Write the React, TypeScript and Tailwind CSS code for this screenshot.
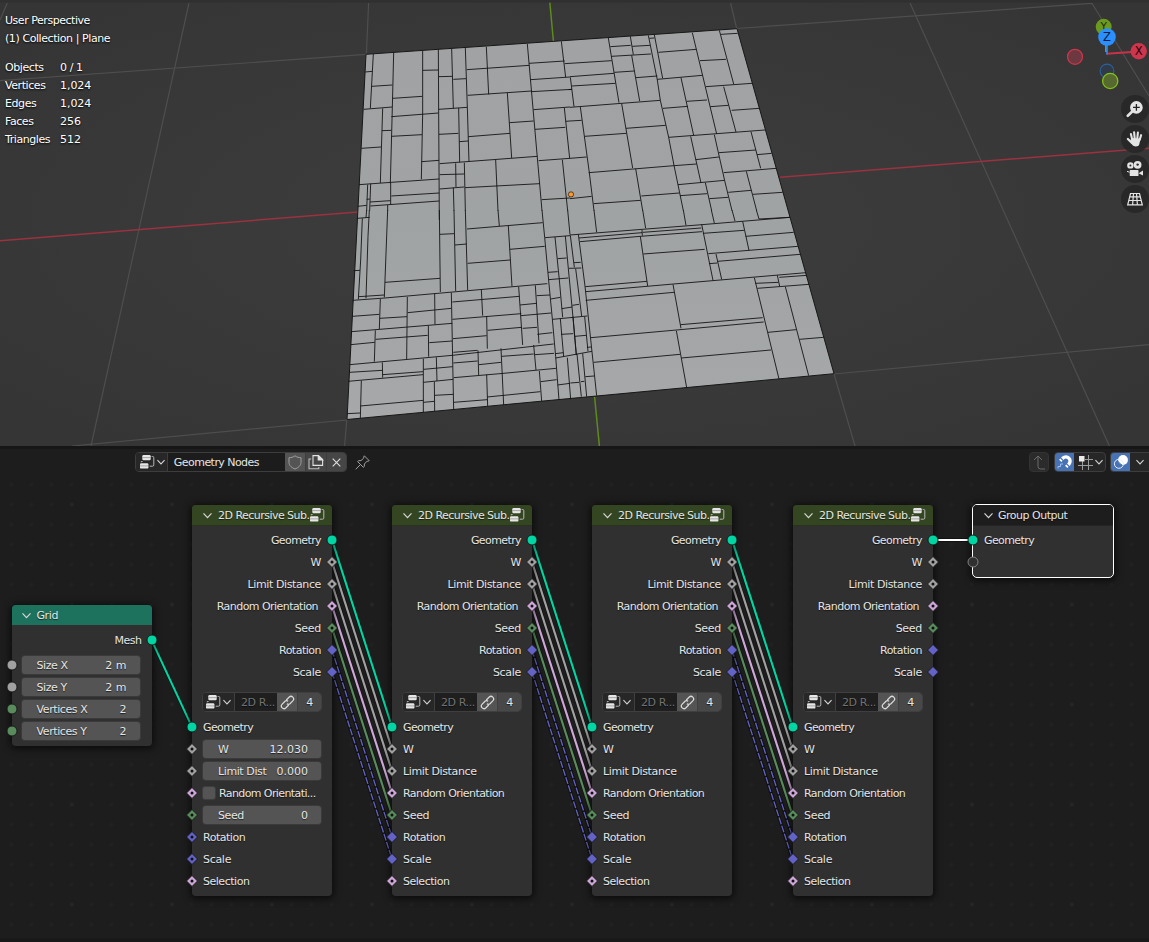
import type { ReactNode } from "react";

type SocketKind = "geometry" | "float" | "bool" | "int" | "vector";
type SocketShape = "circle" | "dot" | "solid";

const SOCKET_FILL: Record<SocketKind, string> = {
  geometry: "#00d6a3",
  float: "#a1a1a1",
  bool: "#cca6d6",
  int: "#598c5c",
  vector: "#6363c7",
};

/* Edges of the subdivided plane, stored in four tiles at one third of a pixel. */
const EDGES_NW =
  "M100 102L91 265M76 156L97 154M95 199L157 195M161 98L157 262L151 490M71 268L157 261M128 265L121 489M126 332L154 331M64 385L123 381M158 235L247 229M154 290L296 279M154 349L246 344M248 93L248 282L244 478M248 151L295 150M295 88L296 280L298 600M245 425L297 421M57 494L154 487L298 477M335 86L340 265M296 170L337 169M340 178L378 176M376 84L382 262L387 425M296 268L382 262M380 149L568 136M439 80L446 223M383 226L575 213M562 72L606 572M356 264L359 427M297 343L355 340M358 365L385 363M385 350L510 340M502 219L515 414M509 308L581 303M299 431L592 409M347 430L348 501M299 464L372 462M373 428L376 572M299 507L372 501M375 503L599 491M467 420L474 572M340 503L342 572M154 528L298 519M90 546L151 542M91 558L298 543M92 491L89 572M83 494L80 572M152 487L152 553M80 538L90 537M54 559L80 556M143 555L143 572M567 130L674 123M664 64L677 172M572 179L690 171M691 172L702 260M574 215L696 208M580 269L690 261M673 264L689 415M677 304L690 303M585 328L676 322M596 422L690 415M667 419L683 572M605 539L690 534";
const EDGES_NE =
  "M-16 131L125 122M115 54L147 248M0 170L132 160M6 198L136 190M-4 209L6 208M0 262L271 241M121 80L182 76M181 49L190 104M124 109L243 102M187 79L240 76M235 46L262 180L271 241L296 352L312 436L340 572M238 55L253 54M253 44L278 175M262 178L397 166M265 97L379 88M367 38L440 342M448 31L491 192M453 43L503 40M390 122L468 118M408 200L546 190M133 157L193 153M185 106L209 243M198 173L262 168M333 173L371 346M279 265L354 259M350 244L411 240M461 200L498 336M421 260L475 256M485 271L568 265M296 352L585 330M155 251L188 444M168 325L287 316M44 349L169 340M31 261L58 458L72 572M56 458L312 437L380 432M362 349L393 489M377 419L447 411M433 344L464 482L486 572M543 335L572 445M447 398L558 390M561 404L605 400M461 458L619 445M324 494L464 481M406 488L425 572M330 527L411 521M418 536L474 532M475 517L544 511M529 454L560 572M549 523L638 517M197 446L218 572M71 551L212 541M214 528L328 519M0 303L35 301M0 415L50 411M0 536L65 529";
const EDGES_SW =
  "M52 25L89 22M80 0L78 23M88 0L84 80L78 265M67 25L62 150L55 268M41 182L60 181M143 0L133 262M135 217L300 205M57 260L133 255M38 271L135 264L622 221M298 0L301 246M300 73L342 71M342 0L347 243M345 105L380 102M376 0L383 240M381 57L608 38M474 0L478 48M505 48L516 229M509 118L614 109M383 160L511 150M606 0L614 82L627 222L637 327L647 440L657 570M683 0L690 74M615 83L690 77M645 81L658 210L668 322M661 326L671 440M676 78L685 176L699 322L709 435M691 76L703 172M653 146L680 144M624 187L653 185M626 209L685 204M702 158L722 157M686 175L724 174M707 176L725 318M632 267L661 262M665 296L697 291M697 286L717 283M638 328L742 318M663 373L700 371M705 379L738 376M647 444L756 424M646 431L670 428M699 320L709 435M734 320L744 424M741 412L753 411M711 432L724 560M728 430L740 560M653 525L690 520M691 519L717 517M723 515L733 514M736 500L763 498M682 443L692 568M121 267L118 357M37 319L118 313M202 261L200 447M119 325L201 320M34 365L337 340M106 361L103 455M107 388L263 376M32 404L104 397M284 251L285 343M203 308L334 295M334 248L341 600M265 347L266 440M268 398L337 393M29 464L337 436L641 402M127 457L128 503M28 487L127 481M24 514L249 494M128 494L249 485M64 512L61 625M61 588L250 571M21 611L61 609M250 446L250 607M289 442L291 513M251 478L338 470M250 517L340 508M283 515L284 604M284 556L340 553M250 577L283 574M424 239L428 317M337 276L538 259M337 328L544 311M536 230L548 405M440 318L442 416M443 361L545 352M339 386L440 377M340 427L412 421M586 226L597 400M540 285L590 280M590 257L630 255M543 317L633 309M548 355L591 352M592 373L637 368M414 421L416 495M340 459L413 453M341 503L480 491L648 475M417 464L483 457M483 415L491 585M485 439L581 432M581 405L588 480M585 434L642 430M440 494L443 588M341 577L442 569M442 561L601 545M598 483L605 573M602 515L650 509";
const EDGES_SE =
  "M0 75L396 44L660 22M395 43L429 211M25 73L45 228L80 557M27 84L216 68M216 60L217 77M218 67L394 54M30 95L211 79L396 65M211 79L233 228M220 132L404 118M46 230L231 214M47 245L311 222L708 188M47 271L312 247M309 223L333 355M332 344L578 323M63 383L320 360L581 336M319 362L350 533M71 457L330 433M334 444L603 420M553 203L627 507M556 220L625 217M622 196L629 229M628 202L711 196M562 235L717 223M594 367L678 359M646 230L716 497M688 388L761 382M518 34L537 121M399 70L522 61M527 79L671 67M415 131L684 109M438 132L455 208M417 161L442 159M443 154L690 133M72 0L80 67M218 0L227 55M340 0L348 46M424 0L433 39M486 0L495 33M559 0L567 27M567 27L660 22";

function Viewport() {
  return (
    <section className="relative h-[446px] overflow-hidden bg-[#393939]">
      <svg className="block h-full w-full" viewBox="0 0 1149 446">
        <defs>
          <radialGradient id="world" cx="0.5" cy="0.5" r="0.65">
            <stop offset="0" stopColor="#3e3e3e" />
            <stop offset="1" stopColor="#353535" />
          </radialGradient>
          <linearGradient id="plane" x1="0" y1="0" x2="0" y2="1">
            <stop offset="0" stopColor="#a1a2a4" />
            <stop offset="0.5" stopColor="#a0a3a4" />
            <stop offset="1" stopColor="#a6a8aa" />
          </linearGradient>
        </defs>
        <rect width="1149" height="446" fill="url(#world)" />
        <g stroke="#4e4e4e" strokeWidth="1.2" fill="none">
          <path d="M189 3L91 446M368.6 3L366.4 54M0 80.7L366 54.3M736.5 28.5L1091.8 3.3M730.6 3L736.8 29M910 3L1109.4 446M1091.8 3L1149 96M834 374L1149 344.6M834 374L855 446M347 420L72 446M346.8 419L344.6 446M7.3 3L0 20" />
        </g>
        <g strokeWidth="1.5" fill="none">
          <path d="M0 240.7L358 212M780 177.3L1149 148.3" stroke="#9a3240" />
          <path d="M549.6 0L553.4 41M594.6 397L599.4 446" stroke="#5f8a1f" />
        </g>
        <rect width="1149" height="2.6" fill="#303030" />
        <path d="M366 54.3L737 28.7L834 373.7L347 419.5Z" fill="url(#plane)" stroke="#171717" strokeWidth="1" />
        <g stroke="#141414" strokeWidth="2.7" fill="none">
          <path d={EDGES_NW} transform="translate(340 20) scale(.33333)" />
          <path d={EDGES_NE} transform="translate(570 20) scale(.33333)" />
          <path d={EDGES_SW} transform="translate(340 210) scale(.33333)" />
          <path d={EDGES_SE} transform="translate(570 210) scale(.33333)" />
        </g>
        <circle cx="571" cy="194.4" r="2.6" fill="#ff9a2e" stroke="#3a2410" strokeWidth="0.8" />
        <g>
          <circle cx="1103.7" cy="26.8" r="8" fill="#6b9a1e" />
          <text x="1103.7" y="30" textAnchor="middle" fontFamily="DejaVu Sans" fontSize="10.5" fill="#1c2a06">Y</text>
          <path d="M1106 44v8" stroke="#7a9a30" strokeWidth="2" />
          <path d="M1106.5 53.8L1132 52" stroke="#c8334a" strokeWidth="2" />
          <path d="M1107 44v10.6" stroke="#2c86ea" strokeWidth="1.7" />
          <circle cx="1107" cy="37" r="8.8" fill="#2c8fff" />
          <text x="1107" y="41.2" textAnchor="middle" fontFamily="DejaVu Sans" fontSize="11.5" fill="#061c38">Z</text>
          <circle cx="1138.7" cy="51.2" r="8.2" fill="#cf354c" />
          <text x="1138.7" y="55.3" textAnchor="middle" fontFamily="DejaVu Sans" fontSize="11.5" fill="#23060b">X</text>
          <circle cx="1075" cy="56.8" r="7.5" fill="#6e3840" stroke="#cf354c" strokeWidth="1.2" />
          <circle cx="1107" cy="71" r="6.9" fill="#303b49" stroke="#2d5f9c" strokeWidth="1.1" />
          <circle cx="1110.2" cy="81" r="7.6" fill="#56692f" stroke="#82c214" strokeWidth="1.3" />
        </g>
      </svg>
      <div className="absolute top-[12px] left-[5px] text-[11px] leading-[18px] tracking-[-0.42px] whitespace-pre text-white [text-shadow:0_1px_2px_#000]">
        <p className="tracking-[-0.46px]">User Perspective</p>
        <p>(1) Collection | Plane</p>
        <dl className="mt-[11px] grid grid-cols-[55px_auto]">
          {[
            ["Objects", "0 / 1"],
            ["Vertices", "1,024"],
            ["Edges", "1,024"],
            ["Faces", "256"],
            ["Triangles", "512"],
          ].map(([name, value]) => (
            <div key={name} className="contents">
              <dt>{name}</dt>
              <dd className={name === "Objects" ? "tracking-[-0.42px]" : "tracking-[-0.05px]"}>{value}</dd>
            </div>
          ))}
        </dl>
      </div>
      <div className="absolute top-[95px] right-0 flex w-7 flex-col gap-[2px]">
        {[<ZoomIcon key="z" />, <HandIcon key="h" />, <CameraIcon key="c" />, <PerspectiveIcon key="p" />].map((icon, i) => (
          <button key={i} className="flex size-7 items-center justify-center rounded-full bg-[#272727]/90">
            {icon}
          </button>
        ))}
      </div>
    </section>
  );
}

function ZoomIcon() {
  return (
    <svg width="18" height="18" viewBox="0 0 18 18">
      <path d="M1.8 15.8L6.5 11.3" stroke="#e4e4e4" strokeWidth="2.6" strokeLinecap="round" />
      <circle cx="10.4" cy="7.4" r="6.3" fill="#e4e4e4" />
      <path d="M7 7.4h6.8M10.4 4v6.8" stroke="#222" strokeWidth="1.3" />
    </svg>
  );
}

function HandIcon() {
  return (
    <svg width="18" height="18" viewBox="0 0 18 18" fill="none" stroke="#e4e4e4" strokeLinecap="round">
      <path d="M6.2 9.5L4.9 4M8.7 8.5L8.1 2.2M11.3 8.5L11.9 2.6M13.6 10L15.1 5.2" strokeWidth="2.1" />
      <path d="M1.9 9L6 13" strokeWidth="2.3" />
      <path d="M5.2 8L14.6 8.500L13.3 14.2C12.8 17 7.700 17 6.4 15L4.2 11.600Z" fill="#e4e4e4" stroke="none" />
    </svg>
  );
}

function CameraIcon() {
  return (
    <svg width="18" height="18" viewBox="0 0 18 18" fill="#e4e4e4">
      <circle cx="4.4" cy="5.4" r="3.2" />
      <circle cx="11.6" cy="4.8" r="3.9" />
      <circle cx="4.4" cy="5.4" r="1" fill="#272727" />
      <circle cx="11.6" cy="4.6" r="1.2" fill="#272727" />
      <path d="M4.5 10h7.2q.8 0 .8.8v4.4q0 .9-.8.9H4.5q-.8 0-.8-.9v-4.4q0-.8.8-.8zM13 13l4-2.4v5L13 13.600z" />
      <path d="M1 11.400L3.500 12.200" stroke="#e4e4e4" />
    </svg>
  );
}

function PerspectiveIcon() {
  return (
    <svg width="18" height="18" viewBox="0 0 18 18" fill="none" stroke="#e4e4e4" strokeWidth="1.2">
      <path d="M4.5 3.500H13.500L16.300 14.800H1.700ZM3.700 6.800H14.300M2.800 10.500H15.200M7.500 3.500L6.600 14.800M10.500 3.500L11.400 14.800" />
    </svg>
  );
}

function NodeTreeIcon() {
  return (
    <svg width="15" height="14" viewBox="0 0 15 14" className="shrink-0">
      <rect x="2.300" y="0" width="8.400" height="5.300" rx="1.200" fill="#e6e6e6" />
      <rect x="0" y="8.300" width="8.400" height="5.300" rx="1.200" fill="#e6e6e6" />
      <path d="M2.300 2.600h8.400M0 10.900h8.400" stroke="#8a8a8a" strokeWidth=".7" />
      <path d="M11.700 1.500h1q1.100 0 1.100 1.100v7.300q0 1.300-1.300 1.300H9.700M1.200 7.300V6.500H2.600" fill="none" stroke="#b8b8b8" />
    </svg>
  );
}

function Chevron({ size = 9 }: { size?: number }) {
  return (
    <svg width={size} height={size} viewBox="0 0 9 9" fill="none" className="shrink-0">
      <path d="M.5 2.400L4.500 6.600L8.500 2.400" stroke="#d6d6d6" strokeWidth="1.2" />
    </svg>
  );
}

function EditorHeader() {
  return (
    <header className="flex h-[29px] items-center border-t-[3px] border-[#161616] pl-[135px]">
      <div className="flex h-[20px] w-[212px] overflow-hidden rounded-[4px] border border-[#3d3d3d]">
        <span className="flex w-[31px] items-center gap-[2px] bg-[#272727] pl-[4px]">
          <NodeTreeIcon />
          <Chevron size={8} />
        </span>
        <span className="flex w-[119px] items-center border-l border-[#3d3d3d] bg-[#1c1c1c] pl-[6px] text-[11px] leading-none tracking-[-0.55px]">
          Geometry Nodes
        </span>
        <span className="flex w-5 items-center justify-center bg-[#545454]">
          <svg width="14" height="15" viewBox="0 0 14 15" fill="none">
            <path d="M7 .8C5 2.300 3 2.700 1 2.700V7.500C1 10.500 4 13 7 14C10 13 13 10.500 13 7.500V2.700C11 2.700 9 2.300 7 .8Z" stroke="#a0a0a0" />
          </svg>
        </span>
        <span className="flex w-[21px] items-center justify-center border-l border-[#3d3d3d] bg-[#464646]">
          <svg width="16" height="15" viewBox="0 0 16 15" fill="none" stroke="#e2e2e2" strokeWidth="1.1">
            <path d="M5 .6h5.500L14.600 4.500V10.400H5Z" />
            <path d="M10.200 .600V4.900H14.600Z" fill="#e2e2e2" />
            <path d="M3.200 4H1V13.800H10.800V12" stroke="#bdbdbd" />
          </svg>
        </span>
        <span className="flex w-[20px] items-center justify-center border-l border-[#3d3d3d] bg-[#464646]">
          <svg width="9" height="9" viewBox="0 0 9 9">
            <path d="M.700 .700L8.300 8.300M8.300 .700L.700 8.300" stroke="#e0e0e0" strokeWidth="1.100" />
          </svg>
        </span>
      </div>
      <svg className="ml-[8px]" width="15" height="15" viewBox="0 0 15 15" fill="none" stroke="#a0a0a0">
        <path d="M9.300 .8L14.200 5.700L12.700 6.300L12 6.200L9.400 9L9.300 11.500L8.300 12.300L2.700 6.700L3.500 5.700L6 5.600L8.800 3L8.700 2.200ZM5.300 9.700L.7 14.300" />
      </svg>
      <div className="ml-auto flex h-[20px]">
        <span className="flex w-5 items-center justify-center rounded-[4px] border border-[#333] bg-[#2b2b2b]">
          <svg width="13" height="15" viewBox="0 0 13 15" fill="none" stroke="#6c6c6c">
            <path d="M1 5L5 1L9 5M5 1V11.500Q5 14 7.500 14H12" />
          </svg>
        </span>
        <span className="ml-[5px] flex w-[52px] overflow-hidden rounded-[4px] border border-[#3d3d3d] bg-[#272727]">
          <span className="flex w-[19px] items-center justify-center bg-[#4772b3]">
            <svg width="16" height="16" viewBox="0 0 16 16" fill="none">
              <path d="M5.300 4.700L6 4A4.250 4.250 0 0 1 12 10L11.300 10.700" stroke="#fff" strokeWidth="3.400" />
              <path d="M3.200 6.800L4.400 5.600M9.200 12.800L10.400 11.600" stroke="#fff" strokeWidth="3.200" />
              <path d="M1 14.500V12.500H3.500V10H6" stroke="#aec6ea" strokeWidth=".9" />
            </svg>
          </span>
          <span className="flex flex-1 items-center justify-between pr-[2px] pl-[4px]">
            <svg width="15" height="15" viewBox="0 0 15 15" fill="none">
              <path d="M4.500 6V15M10.500 0V15M0 10.500H15M7 4.500H15" stroke="#9b9b9b" />
              <rect x="1" y="1" width="5.500" height="5.500" fill="#ececec" />
            </svg>
            <Chevron size={8} />
          </span>
        </span>
        <span className="ml-[4px] flex w-[39px] overflow-hidden rounded-l-[4px] border border-r-0 border-[#3d3d3d] bg-[#272727]">
          <span className="flex w-[19px] items-center justify-center bg-[#4772b3]">
            <svg width="16" height="16" viewBox="0 0 16 16" fill="none">
              <circle cx="10" cy="6" r="4.900" fill="#fff" />
              <circle cx="5.900" cy="9.800" r="4.500" stroke="#e6edf8" />
              <path d="M5.400 7.400A4.900 4.900 0 0 0 8.800 10.700" stroke="#4772b3" strokeWidth="1" />
            </svg>
          </span>
          <span className="flex flex-1 items-center justify-center pl-[1px]">
            <Chevron size={8} />
          </span>
        </span>
      </div>
    </header>
  );
}

function Socket({ kind, shape, side }: { kind: SocketKind; shape: SocketShape; side: "left" | "right" }) {
  return (
    <svg
      className={side === "left" ? "absolute top-[4px] left-[-7px]" : "absolute top-[4px] right-[-7px]"}
      width="14"
      height="14"
      viewBox="0 0 14 14"
    >
      {shape === "circle" ? (
        <circle cx="7" cy="7" r="5" fill={SOCKET_FILL[kind]} stroke="#161616" strokeWidth=".9" />
      ) : (
        <path d="M7 1.500L12.500 7L7 12.500L1.500 7Z" fill={SOCKET_FILL[kind]} stroke="#161616" strokeWidth=".9" />
      )}
      {shape === "dot" && <circle cx="7" cy="7" r="1.500" fill="#101010" />}
    </svg>
  );
}

function Row({ children, socket, className = "" }: { children: ReactNode; socket?: ReactNode; className?: string }) {
  return (
    <div className={"relative flex h-[22px] items-center " + className}>
      {socket}
      {children}
    </div>
  );
}

function Field({ label, value }: { label: string; value: string }) {
  return (
    <div className="ml-[11px] flex h-[18px] w-[118px] items-center justify-between rounded-[3px] bg-[#545454] pr-[13px] pl-[15px] shadow-[0_0_0_1px_#3a3a3a]">
      <span className="tracking-[-0.4px]">{label}</span>
      <span className="tracking-normal">{value}</span>
    </div>
  );
}

const OUTPUTS: [string, SocketKind, SocketShape][] = [
  ["Geometry", "geometry", "circle"],
  ["W", "float", "dot"],
  ["Limit Distance", "float", "dot"],
  ["Random Orientation", "bool", "dot"],
  ["Seed", "int", "dot"],
  ["Rotation", "vector", "solid"],
  ["Scale", "vector", "solid"],
];

const LABEL_TRACKING: Record<string, string> = {
  Geometry: "tracking-[-0.6px]",
  "Limit Distance": "tracking-[-0.38px]",
  "Random Orientation": "tracking-[-0.55px]",
  Seed: "tracking-[-0.3px]",
  Scale: "tracking-[-0.3px]",
};

const NODE_SHELL = "absolute w-[140px] rounded-[4px] bg-[#303030] shadow-[0_1px_7px_2px_rgba(0,0,0,0.6)]";

function GroupNode({ first, className }: { first?: boolean; className: string }) {
  const inputs: [string, SocketKind, SocketShape][] = [
    ...OUTPUTS.map(([n, k, s]): [string, SocketKind, SocketShape] => [n, k, first && s === "solid" ? "dot" : s]),
    ["Selection", "bool", "dot"],
  ];
  return (
    <article className={NODE_SHELL + " top-[505px] h-[391px] " + className}>
      <h2 className="flex h-[21px] items-center rounded-t-[4px] border-b border-[#28331b] bg-[#344621] pl-[11px]">
        <Chevron />
        <span className="ml-[6px] w-[92px] overflow-hidden tracking-[-0.53px] whitespace-nowrap">2D Recursive Sub.</span>
        <NodeTreeIcon />
      </h2>
      <div className="pt-[3px]">
        {OUTPUTS.map(([name, kind, shape]) => (
          <Row
            key={name}
            className={name === "Random Orientation" ? "justify-end pr-[14px]" : "justify-end pr-[11px]"}
            socket={<Socket kind={kind} shape={shape} side="right" />}
          >
            <span className={LABEL_TRACKING[name] ?? "tracking-[-0.5px]"}>{name}</span>
          </Row>
        ))}
      </div>
      <div className="mt-[9px] ml-[10px] flex h-5 w-[120px] overflow-hidden rounded-[4px] border border-[#3f3f3f] bg-[#1f1f1f]">
        <span className="flex w-[31px] items-center gap-[2px] bg-[#272727] pl-[3px]">
          <NodeTreeIcon />
          <Chevron size={8} />
        </span>
        <span className="flex w-[43px] items-center border-l border-[#3f3f3f] pl-[6px] tracking-[-0.4px] text-[#727272]">2D R...</span>
        <span className="flex w-[20px] items-center justify-center bg-[#545454]">
          <svg width="15" height="15" viewBox="0 0 15 15" fill="none" stroke="#dcdcdc" strokeWidth="1.200">
            <path d="M6.300 5L9.300 2Q11 .4 12.800 2.200Q14.600 4 13 5.700L10 8.700Q8.500 10 6.900 8.700" />
            <path d="M8.700 10L5.700 13Q4 14.600 2.200 12.800Q.4 11 2 9.300L5 6.300Q6.500 5 8.100 6.300" />
          </svg>
        </span>
        <span className="flex flex-1 items-center justify-center border-l border-[#3f3f3f] bg-[#484848]">4</span>
      </div>
      <div className="mt-[4px]">
        {inputs.map(([name, kind, shape]) => (
          <Row key={name} socket={<Socket kind={kind} shape={shape} side="left" />}>
            {first && name === "W" ? (
              <Field label="W" value="12.030" />
            ) : first && name === "Limit Distance" ? (
              <Field label="Limit Dist" value="0.000" />
            ) : first && name === "Seed" ? (
              <Field label="Seed" value="0" />
            ) : first && name === "Random Orientation" ? (
              <>
                <span className="ml-[10px] size-[14px] rounded-[3px] border border-[#3d3d3d] bg-[#545454]" />
                <span className="ml-[3px]">Random Orientati...</span>
              </>
            ) : (
              <span className={"ml-[11px] " + (LABEL_TRACKING[name] ?? "tracking-[-0.48px]")}>{name}</span>
            )}
          </Row>
        ))}
      </div>
    </article>
  );
}

function Links() {
  const spans = [
    [332, 392],
    [532, 592],
    [732, 792.500],
  ];
  return (
    <svg className="absolute inset-0 h-full w-full" viewBox="0 446 1149 496" fill="none">
      <defs>
        <pattern id="dots" x="1.500" y="14.500" width="20" height="20" patternUnits="userSpaceOnUse">
          <rect x="8.500" y="8.500" width="3" height="3" fill="#222222" />
        </pattern>
        <pattern id="majorDots" x="22" y="54.500" width="100" height="100" patternUnits="userSpaceOnUse">
          <rect x="48.500" y="48.500" width="3" height="3" fill="#272727" />
        </pattern>
      </defs>
      <rect y="474" width="1149" height="464" fill="url(#dots)" />
      <rect y="474" width="1149" height="464" fill="url(#majorDots)" />
      <path d="M151.500 640L192 727" stroke="#0f0f0f" strokeWidth="3.200" />
      <path d="M151.500 640L192 727" stroke="#00d6a3" strokeWidth="2" />
      {spans.map(([from, to]) =>
        OUTPUTS.map(([name, kind], i) => {
          const d = `M${from} ${540 + i * 22}L${to} ${727 + i * 22}`;
          const dashed = kind === "vector";
          return (
            <g key={name + from}>
              <path d={d} stroke="#101010" strokeWidth="3.400" />
              <path
                d={d}
                stroke={SOCKET_FILL[kind]}
                strokeWidth={dashed ? 1.300 : 2.200}
                strokeDasharray={dashed ? "7 1.500" : undefined}
              />
            </g>
          );
        })
      )}
      <path d="M933 540H972" stroke="#111" strokeWidth="4" />
      <path d="M933 540H972" stroke="#fff" strokeWidth="2" />
    </svg>
  );
}

export default function App() {
  return (
    <main className="flex h-[942px] w-[1149px] flex-col overflow-hidden bg-[#1d1d1d] font-['DejaVu_Sans',sans-serif] text-[#e5e5e5]">
      <Viewport />
      <section className="flex flex-1 flex-col">
        <EditorHeader />
        <div className="flex-1 border-b-4 border-[#191919]" />
      </section>
      <div className="pointer-events-none absolute top-0 left-0 h-[942px] w-[1149px] overflow-hidden text-[11px] leading-none tracking-[-0.6px] [text-shadow:0_1px_1px_rgba(0,0,0,0.6)]">
        <div className="absolute top-[446px] left-0 h-[496px] w-full">
          <Links />
        </div>
        <article className={NODE_SHELL + " top-[605px] left-[11.5px] h-[141px]"}>
          <h2 className="flex h-[20px] items-center gap-[6px] rounded-t-[4px] bg-[#1d725e] pl-[10px] tracking-[-0.4px]">
            <Chevron />
            Grid
          </h2>
          <Row className="mt-[4px] justify-end pr-[10px]" socket={<Socket kind="geometry" shape="circle" side="right" />}>
            <span className="tracking-[-0.5px]">Mesh</span>
          </Row>
          <div className="mt-[3px] -ml-px pl-px">
            {(
              [
                ["Size X", "2 m", "float"],
                ["Size Y", "2 m", "float"],
                ["Vertices X", "2", "int"],
                ["Vertices Y", "2", "int"],
              ] as [string, string, SocketKind][]
            ).map(([name, value, kind]) => (
              <Row key={name} socket={<Socket kind={kind} shape="circle" side="left" />}>
                <div className="-ml-px">
                  <Field label={name} value={value} />
                </div>
              </Row>
            ))}
          </div>
        </article>
        <GroupNode first className="left-[192px]" />
        <GroupNode className="left-[392px]" />
        <GroupNode className="left-[592px]" />
        <GroupNode className="left-[793px]" />
        <article className="absolute top-[504px] left-[972px] h-[74px] w-[142px] rounded-[5px] border border-white bg-[#303030] shadow-[0_1px_7px_2px_rgba(0,0,0,0.6)]">
          <h2 className="flex h-[21px] items-center gap-[5px] rounded-t-[4px] border-b border-[#242424] bg-[#1d1d1d] pl-[11px] tracking-[-0.48px]">
            <Chevron />
            Group Output
          </h2>
          <Row className="mt-[3px] pl-[11px]" socket={<Socket kind="geometry" shape="circle" side="left" />}>
            Geometry
          </Row>
          <Row
            socket={
              <svg className="absolute top-[4px] left-[-7px]" width="14" height="14" viewBox="0 0 14 14">
                <circle cx="7" cy="7" r="5" fill="#303030" stroke="#808080" />
              </svg>
            }
          >
            <span />
          </Row>
        </article>
      </div>
    </main>
  );
}
